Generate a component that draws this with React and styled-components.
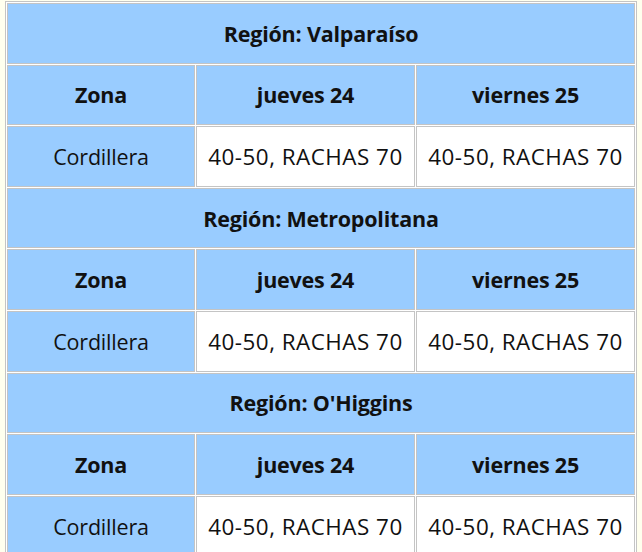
import styled, { createGlobalStyle } from "styled-components";

const GlobalStyle = createGlobalStyle`
  html, body {
    margin: 0;
    padding: 0;
    background: #ffffee;
  }
  body {
    padding: 1px 0 0 5px;
    font-family: "Open Sans", "Noto Sans", sans-serif;
    color: #111;
  }
`;

const Table = styled.table`
  width: 632px;
  border-collapse: separate;
  border-spacing: 1px;
  border: 1px solid #c4c4c4;
  background: #ffffff;
  table-layout: fixed;
`;

const Cell = styled.td`
  border: 1px solid #c4c4c4;
  height: 57.6px;
  padding: 1px 0 0;
  line-height: 1.3;
  text-align: center;
  vertical-align: middle;
  font-size: ${({ $data }) => ($data ? "22.4px" : "21.5px")};
  letter-spacing: ${({ $data }) => ($data ? "0.5px" : "-0.2px")};
  font-weight: ${({ $bold }) => ($bold ? 700 : 400)};
  background: ${({ $blue }) => ($blue ? "#99ccff" : "#ffffff")};
`;

const regions = ["Valparaíso", "Metropolitana", "O'Higgins"];
const days = ["jueves 24", "viernes 25"];

const RegionBlock = ({ name }) => (
  <>
    <tr>
      <Cell colSpan={3} $blue $bold>
        Región: {name}
      </Cell>
    </tr>
    <tr>
      <Cell $blue $bold>
        Zona
      </Cell>
      {days.map((d) => (
        <Cell key={d} $blue $bold>
          {d}
        </Cell>
      ))}
    </tr>
    <tr>
      <Cell $blue>Cordillera</Cell>
      {days.map((d) => (
        <Cell key={d} $data>
          40-50, RACHAS 70
        </Cell>
      ))}
    </tr>
  </>
);

const App = () => (
  <>
    <GlobalStyle />
    <Table>
      <colgroup>
        <col style={{ width: "188px" }} />
        <col style={{ width: "219px" }} />
        <col style={{ width: "219px" }} />
      </colgroup>
      <tbody>
        {regions.map((r) => (
          <RegionBlock key={r} name={r} />
        ))}
      </tbody>
    </Table>
  </>
);

export default App;
